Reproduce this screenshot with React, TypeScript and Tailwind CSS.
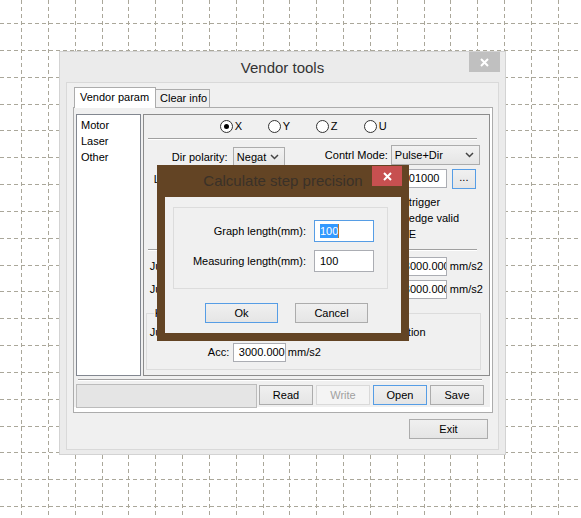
import React from 'react'

const font = { fontFamily: '"Liberation Sans", Arial, sans-serif' }

function Grid() {
  const vx = Array.from({ length: 22 }, (_, k) => Math.round(21 + 26.84 * k) + 0.5)
  const hy = Array.from({ length: 20 }, (_, k) => Math.round(23 + 26.84 * k) + 0.5)
  return (
    <svg className="absolute inset-0" width="581" height="518">
      {vx.map((x) => (
        <line key={'v' + x} x1={x} y1={0} x2={x} y2={518} stroke="#aaa79a" strokeDasharray="4 3" />
      ))}
      {hy.map((y) => (
        <line key={'h' + y} x1={0} y1={y} x2={581} y2={y} stroke="#aaa79a" strokeDasharray="4 3" />
      ))}
    </svg>
  )
}

function CloseX({ size = 9 }: { size?: number }) {
  return (
    <svg width={size} height={size} viewBox="0 0 9 9">
      <path d="M1 1L8 8M8 1L1 8" stroke="#fff" strokeWidth="2" />
    </svg>
  )
}

function Radio({ label, checked }: { label: string; checked?: boolean }) {
  return (
    <div className="w-[48px] flex items-center gap-[2px]">
      <span className="w-[13px] h-[13px] rounded-full border border-[#333] bg-white flex items-center justify-center">
        {checked && <span className="w-[5px] h-[5px] rounded-full bg-black" />}
      </span>
      <span>{label}</span>
    </div>
  )
}

function Select({ value, w, h = 20 }: { value: string; w: number; h?: number }) {
  return (
    <div
      className="flex items-center justify-between border border-[#acacac] bg-gradient-to-b from-[#f2f2f2] to-[#e5e5e5] pl-[3px] pr-[5px]"
      style={{ width: w, height: h }}
    >
      <span>{value}</span>
      <svg width="9" height="6" viewBox="0 0 9 6">
        <path d="M1 1L4.5 4.5L8 1" fill="none" stroke="#444" strokeWidth="1.5" />
      </svg>
    </div>
  )
}

function Field({ value, w, h = 19, pl = 3 }: { value: string; w: number; h?: number; pl?: number }) {
  return (
    <div
      className="flex items-center border border-[#abadb3] bg-white overflow-hidden whitespace-nowrap"
      style={{ width: w, height: h, paddingLeft: pl }}
    >
      {value}
    </div>
  )
}

function Btn({
  label,
  w,
  focus,
  disabled,
}: {
  label: string
  w: number
  focus?: boolean
  disabled?: boolean
}) {
  const cls = disabled
    ? 'border-[#d9d9d9] bg-[#f4f4f4] text-[#a0a0a0]'
    : focus
      ? 'border-[#569de5] bg-gradient-to-b from-[#f0f0f0] to-[#e5e5e5] text-black'
      : 'border-[#acacac] bg-gradient-to-b from-[#f0f0f0] to-[#e5e5e5] text-black'
  return (
    <div className={`h-[20px] flex items-center justify-center border ${cls}`} style={{ width: w }}>
      {label}
    </div>
  )
}

function Sep({ w }: { w: number }) {
  return <div className="h-[2px] border-t border-[#a0a0a0] border-b border-b-white" style={{ width: w }} />
}

function MotorGroup() {
  return (
    <div className="w-[348px] h-[262px] ml-[2px] border border-[#8c8c8c] bg-[#f0f0f0] flex flex-col">
      <div className="mt-[5px] ml-[76px] flex h-[13px]">
        <Radio label="X" checked />
        <Radio label="Y" />
        <Radio label="Z" />
        <Radio label="U" />
      </div>
      <div className="mt-[5px] ml-[4px]">
        <Sep w={329} />
      </div>
      <div className="mt-[5px] flex items-start h-[22px]">
        <div className="ml-[28px] w-[61px] h-[22px] flex items-center pt-[2px]">Dir polarity:</div>
        <div className="mt-[2px]">
          <Select value="Negat" w={52} />
        </div>
        <div className="ml-[40px] w-[66px] h-[20px] flex items-center">Contrl Mode:</div>
        <Select value="Pulse+Dir" w={89} />
      </div>
      <div className="mt-[2px] flex items-start h-[20px]">
        <div className="ml-[10px] w-[251px] h-[20px] flex items-center">Lead:</div>
        <Field value="01000" w={42} />
        <div className="ml-[5px] w-[24px] h-[20px] border border-[#569de5] bg-gradient-to-b from-[#f0f0f0] to-[#e5e5e5] flex items-center justify-center pb-[3px]">
          ...
        </div>
      </div>
      <div className="mt-[5px] pl-[265px] h-[16px] flex items-center">trigger</div>
      <div className="pl-[265px] h-[16px] flex items-center">edge valid</div>
      <div className="pl-[265px] h-[16px] flex items-center">E</div>
      <div className="mt-[7px] ml-[4px]">
        <Sep w={329} />
      </div>
      <div className="mt-[6px] flex items-center h-[19px]">
        <div className="ml-[6px] w-[248px]">Jump:</div>
        <Field value="3000.000" w={49} pl={5} />
        <span className="ml-[3px]">mm/s2</span>
      </div>
      <div className="mt-[4px] flex items-center h-[19px]">
        <div className="ml-[6px] w-[248px]">Jump:</div>
        <Field value="3000.000" w={49} pl={5} />
        <span className="ml-[3px]">mm/s2</span>
      </div>
      <div className="relative mt-[14px] ml-[2px] w-[335px] h-[57px] border border-[#dcdcdc] flex flex-col">
        <span className="absolute left-[7px] top-[-7px] bg-[#f0f0f0] px-[1px] leading-[13px]">Key</span>
        <div className="mt-[10px] h-[16px] flex items-center">
          <span className="ml-[3px] w-[258px]">Jump</span>
          <span>tion</span>
        </div>
        <div className="mt-[3px] flex items-center h-[19px]">
          <span className="ml-[61px] w-[25px]">Acc:</span>
          <Field value="3000.000" w={53} pl={5} />
          <span className="ml-[2px]">mm/s2</span>
        </div>
      </div>
    </div>
  )
}

function VendorWindow() {
  return (
    <div className="absolute left-[59px] top-[51px] w-[447px] h-[404px] border border-[#d3d3d3] bg-[#ebebeb]">
      <div className="relative h-[30px] flex items-center justify-center text-[15px] text-[#333] pt-[1px]">
        Vendor tools
        <div className="absolute right-[5px] top-0 w-[31px] h-[20px] bg-[#c0c0c0] flex items-center justify-center">
          <CloseX />
        </div>
      </div>
      <div className="mx-[6px] h-[368px] border border-[#d9d9d9] bg-[#f0f0f0]">
        <div className="ml-[6px] mt-[4px] w-[420px]">
          <div className="h-[20px] flex items-end">
            <div className="relative z-10 ml-[1px] w-[82px] h-[21px] mb-[-1px] bg-white border border-[#acacac] border-b-0 pl-[5px] flex items-center pb-[2px]">
              Vendor param
            </div>
            <div className="w-[54px] h-[18px] bg-[#f0f0f0] border border-[#acacac] border-l-0 border-b-0 pl-[4px] flex items-center">
              Clear info
            </div>
          </div>
          <div className="h-[306px] border border-[#acacac] bg-white">
            <div className="w-[416px] h-[299px] bg-[#f0f0f0] flex flex-col">
              <div className="mt-[6px] ml-[2px] flex">
                <div className="w-[65px] h-[262px] border border-[#828790] bg-white pl-[4px] pt-[2px] flex flex-col">
                  <span className="h-[16px] flex items-center">Motor</span>
                  <span className="h-[16px] flex items-center">Laser</span>
                  <span className="h-[16px] flex items-center">Other</span>
                </div>
                <MotorGroup />
              </div>
              <div className="mt-[3px] ml-[4px]">
                <Sep w={404} />
              </div>
              <div className="mt-[3px] ml-[2px] flex items-start">
                <div className="w-[181px] h-[24px] border border-[#bcbcbc] bg-[#e5e5e5]" />
                <div className="ml-[2px] mt-[1px] flex gap-[3px]">
                  <Btn label="Read" w={54} />
                  <Btn label="Write" w={54} disabled />
                  <Btn label="Open" w={54} focus />
                  <Btn label="Save" w={54} />
                </div>
              </div>
            </div>
          </div>
          <div className="mt-[6px] ml-[336px]">
            <Btn label="Exit" w={79} />
          </div>
        </div>
      </div>
    </div>
  )
}

function PrecisionDialog() {
  return (
    <div className="absolute left-[157px] top-[165px] w-[252px] h-[176px] bg-[#634424]">
      <div className="relative h-[32px] flex items-center justify-center text-[15px] text-[#3a3128] pb-[1px]">
        Calculate step precision
        <div className="absolute right-[7px] top-[1px] w-[30px] h-[20px] bg-[#c75050] flex items-center justify-center">
          <CloseX />
        </div>
      </div>
      <div className="mx-[8px] w-[236px] h-[136px] bg-[#f0f0f0] flex flex-col">
        <div className="mt-[10px] ml-[8px] w-[215px] h-[82px] border border-[#dcdcdc] flex flex-col">
          <div className="mt-[12px] flex items-center h-[22px]">
            <span className="w-[132px] text-right">Graph length(mm):</span>
            <div className="ml-[8px] w-[60px] h-[22px] border border-[#569de5] bg-white flex items-center pl-[5px]">
              <span className="bg-[#3399ff] text-white leading-[14px]">100</span>
              <span className="w-[1px] h-[14px] bg-[#c0772a]" />
            </div>
          </div>
          <div className="mt-[8px] flex items-center h-[22px]">
            <span className="w-[132px] text-right">Measuring length(mm):</span>
            <div className="ml-[8px] w-[60px] h-[22px] border border-[#abadb3] bg-white flex items-center pl-[5px]">
              100
            </div>
          </div>
        </div>
        <div className="mt-[14px] ml-[40px] flex gap-[17px]">
          <Btn label="Ok" w={73} focus />
          <Btn label="Cancel" w={73} />
        </div>
      </div>
    </div>
  )
}

export default function App() {
  return (
    <div className="relative w-[581px] h-[518px] overflow-hidden bg-white text-[11px] text-black leading-none" style={font}>
      <Grid />
      <VendorWindow />
      <PrecisionDialog />
    </div>
  )
}
